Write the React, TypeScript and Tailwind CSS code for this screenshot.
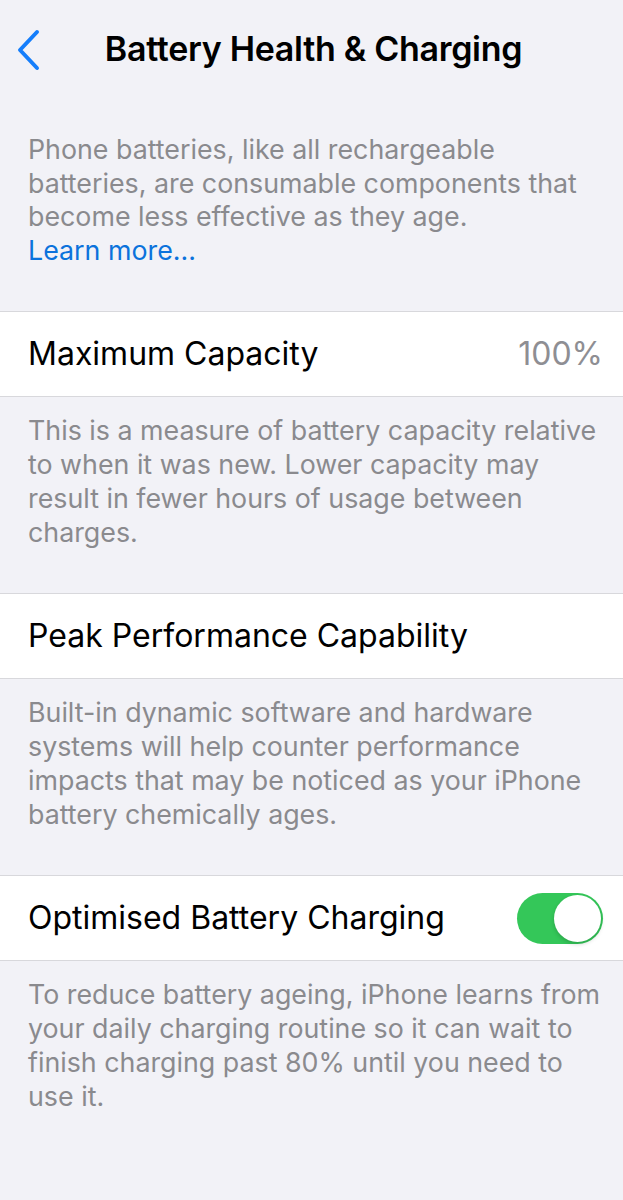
import React from 'react';

const font = { fontFamily: 'Inter, "Noto Sans", sans-serif' };

const Footer: React.FC<{ children: React.ReactNode }> = ({ children }) => (
  <p className="pl-[28px] pr-[14px] pt-[16px] pb-[44px] text-[26.8px] leading-[34px] text-[#8a8a8e]">{children}</p>
);

const Row: React.FC<{ label: string; right?: React.ReactNode }> = ({ label, right }) => (
  <div className="flex h-[86px] items-center justify-between border-y border-[#d8d8dc] bg-white pl-[28px] pr-[20px]">
    <span className="text-[32px] text-black">{label}</span>
    {right}
  </div>
);

const Toggle: React.FC<{ on: boolean; onChange: () => void }> = ({ on, onChange }) => (
  <button
    type="button"
    onClick={onChange}
    className={`relative h-[51px] w-[86px] rounded-full transition ${on ? 'bg-[#34c759]' : 'bg-[#e5e5ea]'}`}
  >
    <span
      className={`absolute top-[2px] h-[47px] w-[47px] rounded-full bg-white shadow-[0_2px_4px_rgba(0,0,0,0.18)] transition-all ${on ? 'left-[37px]' : 'left-[2px]'}`}
    />
  </button>
);

export default function App() {
  const [optimised, setOptimised] = React.useState(true);

  return (
    <div className="min-h-[1200px] w-full bg-[#f2f2f7]" style={font}>
      <header className="relative flex h-[96px] items-center justify-center">
        <button type="button" className="absolute left-[14px] top-[27px] p-[2px]" aria-label="Back">
          <svg width="26" height="42" viewBox="0 0 26 42" fill="none">
            <path d="M21 3 L4 21 L21 39" stroke="#157efb" strokeWidth="4" strokeLinecap="round" strokeLinejoin="round" />
          </svg>
        </button>
        <h1 className="pl-[4px] text-[34px] font-semibold tracking-[-0.3px] text-black">Battery Health &amp; Charging</h1>
      </header>

      <p className="pl-[28px] pr-[14px] pt-[37px] pb-[44px] text-[26.8px] leading-[33.5px] text-[#8a8a8e]">
        Phone batteries, like all rechargeable batteries, are consumable components that become less effective as they age.
        <br />
        <span className="text-[#0b72dc]">Learn more...</span>
      </p>

      <Row label="Maximum Capacity" right={<span className="text-[32px] text-[#8e8e93]">100%</span>} />
      <Footer>
        This is a measure of battery capacity relative to when it was new. Lower capacity may result in fewer hours of usage between charges.
      </Footer>

      <Row label="Peak Performance Capability" />
      <Footer>
        Built-in dynamic software and hardware systems will help counter performance impacts that may be noticed as your iPhone battery chemically ages.
      </Footer>

      <Row label="Optimised Battery Charging" right={<Toggle on={optimised} onChange={() => setOptimised(!optimised)} />} />
      <Footer>
        To reduce battery ageing, iPhone learns from your daily charging routine so it can wait to finish charging past 80% until you need to use it.
      </Footer>
    </div>
  );
}
